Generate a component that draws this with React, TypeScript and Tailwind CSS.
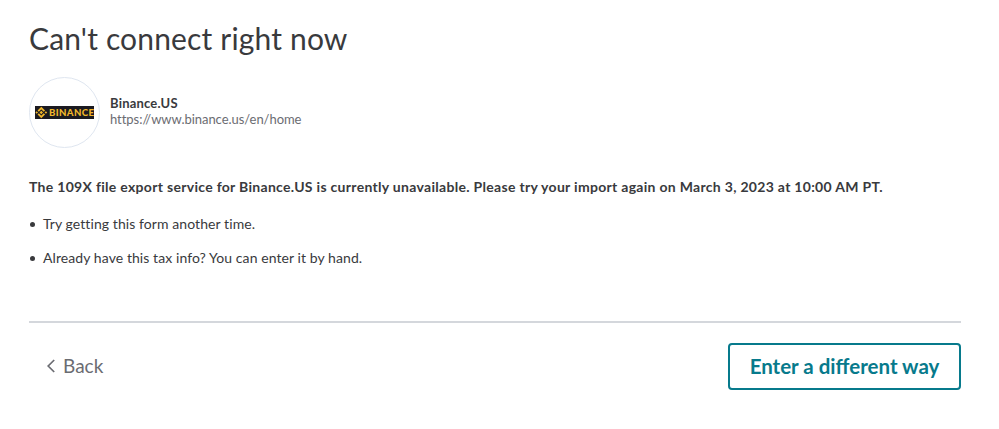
import React from "react";

function BinanceLogo() {
  return (
    <div className="flex size-[71px] shrink-0 items-center justify-center rounded-full border border-[#dfe6f0] bg-white">
      <svg width="59" height="13" viewBox="0 0 59 13" role="img" aria-label="Binance">
        <rect width="59" height="13" fill="#1b1a20" />
        <g transform="translate(6.3 6.5)" fill="none" stroke="#f0b62a" strokeWidth="1.8">
          <path d="M-3.1 -1.4L0 -4.5L3.1 -1.4M-3.1 1.4L0 4.5L3.1 1.4" />
          <path d="M0 -1.7L1.7 0L0 1.7L-1.7 0Z" fill="#f0b62a" stroke="none" />
          <path d="M-4.6 -1.3L-3.3 0L-4.6 1.3L-5.9 0ZM4.6 -1.3L5.9 0L4.6 1.3L3.3 0Z" fill="#f0b62a" stroke="none" />
        </g>
        <text x="14" y="10" textLength="45" fill="#f0b62a" fontFamily="Lato, sans-serif" fontWeight="900" fontSize="9.6">
          BINANCE
        </text>
      </svg>
    </div>
  );
}

function Bullet({ children }: { children: React.ReactNode }) {
  return (
    <li className="flex h-[34px] items-center">
      <span className="mt-[3px] mr-[8px] ml-[1px] size-[5px] rounded-full bg-[#393a3d]" />
      <span className="text-[14px] tracking-[0.08px]">{children}</span>
    </li>
  );
}

export default function App() {
  return (
    <main className="h-[429px] bg-white pr-[38px] pl-[29px] font-['Lato',sans-serif] whitespace-nowrap text-[#393a3d]">
      <h1 className="pt-[19px] text-[30px] leading-[38px] tracking-[0.16px]">Can't connect right now</h1>
      <div className="mt-[20px] flex items-center gap-[10px]">
        <BinanceLogo />
        <div className="-mt-[3px] leading-[16px]">
          <div className="text-[13px] font-bold tracking-[0.2px]">Binance.US</div>
          <div className="text-[13px] tracking-[-0.04px] text-[#6b6c72]">https://www.binance.us/en/home</div>
        </div>
      </div>
      <p className="mt-[29px] text-[14px] leading-[20px] font-bold tracking-[0.3px]">
        The 109X file export service for Binance.US is currently unavailable. Please try your import again on March 3, 2023 at 10:00 AM PT.
      </p>
      <ul className="mt-[9px]">
        <Bullet>Try getting this form another time.</Bullet>
        <Bullet>Already have this tax info? You can enter it by hand.</Bullet>
      </ul>
      <footer className="mt-[47px] flex items-start justify-between border-t-2 border-[#d4d7dc] pt-[20px]">
        <button className="flex h-[46px] items-center pl-[18px] text-[19px] text-[#6b6c72]">
          <svg width="8" height="14" viewBox="0 0 8 14" fill="none" stroke="#6b6c72" strokeWidth="1.7" className="mr-[8px]">
            <path d="M7.2 1L1.2 7L7.2 13" />
          </svg>
          Back
        </button>
        <button className="h-[47px] w-[233px] rounded-[4px] border-2 border-[#077a8c] pb-[2px] text-[20.5px] leading-[24px] font-bold text-[#077a8c]">
          Enter a different way
        </button>
      </footer>
    </main>
  );
}
